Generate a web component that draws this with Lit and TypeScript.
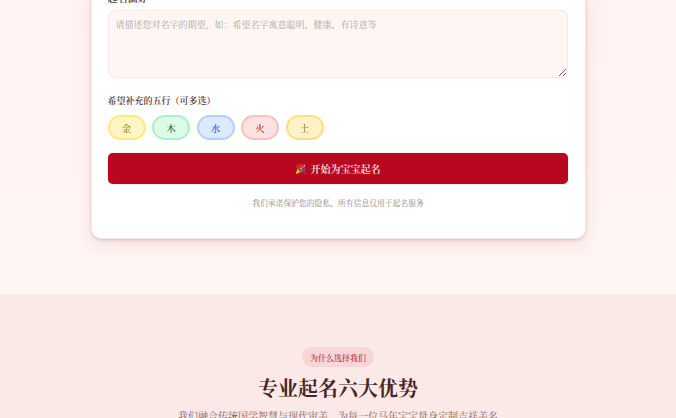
import { LitElement, html, css } from "lit";
import { customElement } from "lit/decorators.js";

const CHIPS = [
  { t: "金", c: "jin" },
  { t: "木", c: "mu" },
  { t: "水", c: "shui" },
  { t: "火", c: "huo" },
  { t: "土", c: "tu" },
];

@customElement("app-root")
export class AppRoot extends LitElement {
  static styles = css`
    :host {
      display: block;
      height: 418px;
      overflow: hidden;
      font-family: "Noto Serif CJK SC", "Liberation Serif", "Noto Sans CJK SC", serif;
      background: #fff;
    }
    .scroll { margin-top: -8px; }
    .top {
      background: linear-gradient(180deg, #fff3f1 0%, #fff5f3 100%);
      height: 302px;
      display: flex;
      justify-content: center;
      box-sizing: border-box;
    }
    .card {
      width: 495px;
      height: 247px;
      box-sizing: border-box;
      background: #fff;
      border-radius: 0 0 10px 10px;
      border: 1px solid #f9e6e6;
      border-top: 0;
      padding: 0 16px;
      box-shadow: 0 1px 3px rgba(130, 50, 50, 0.22), 0 6px 16px rgba(130, 50, 50, 0.1);
      display: flex;
      flex-direction: column;
    }
    .lbl {
      font-size: 9px;
      line-height: 14px;
      font-weight: 600;
      color: #4a3030;
    }
    .top-lbl { height: 12px; margin-top: -1px; margin-bottom: 7px; font-size: 10px; }
    textarea {
      display: block;
      width: 460px;
      height: 68px;
      box-sizing: border-box;
      border: 1.5px solid #fae8e4;
      border-radius: 6px;
      background: #fff6f4;
      padding: 7px 7px;
      font: inherit;
      font-size: 9px;
      line-height: 14px;
      outline: none;
      color: #4a3030;
    }
    textarea::placeholder { color: #aba4a4; }
    .lbl5 { margin-top: 16px; }
    .chips { display: flex; gap: 6.5px; margin-top: 7px; }
    .chip {
      width: 38px;
      height: 25px;
      box-sizing: border-box;
      border-radius: 13px;
      border-width: 2px;
      border-style: solid;
      display: flex;
      align-items: center;
      justify-content: center;
      font-size: 9.5px;
      font-weight: 500;
    }
    .jin { background: #fef7c3; border-color: #fdea7e; color: #9a7b12; }
    .mu { background: #dcfce7; border-color: #aeeec8; color: #15703d; }
    .shui { background: #dbeafe; border-color: #b4d2f8; color: #2a55c0; }
    .huo { background: #fee2e2; border-color: #f9c2c2; color: #b02030; }
    .tu { background: #fef3c7; border-color: #f9df85; color: #92702a; }
    .go {
      margin-top: 13px;
      height: 31px;
      width: 460px;
      border: 0;
      border-radius: 5px;
      background: #b8071e;
      box-shadow: 0 0 1px rgba(184, 7, 30, 0.5);
      color: #fdeeee;
      font: inherit;
      font-size: 10px;
      font-weight: 600;
      display: flex;
      align-items: center;
      justify-content: center;
      gap: 5px;
    }
    .emoji { font-size: 9px; }
    .note {
      margin-top: 13px;
      text-align: center;
      font-size: 7.8px;
      line-height: 12px;
      color: #8e8787;
    }
    .why {
      background: #fbe9e7;
      height: 140px;
      box-sizing: border-box;
      padding-top: 53px;
      display: flex;
      flex-direction: column;
      align-items: center;
    }
    .pill {
      width: 72px;
      height: 20px;
      border-radius: 10px;
      background: #f7d6d8;
      color: #b8253c;
      font-size: 8px;
      font-weight: 500;
      display: flex;
      align-items: center;
      justify-content: center;
    }
    h2 {
      margin: 8px 0 0;
      font-size: 20px;
      line-height: 26px;
      font-weight: 700;
      color: #4a2525;
    }
    .sub {
      margin: 7px 0 0;
      font-size: 10px;
      line-height: 15px;
      color: #7d6464;
      white-space: nowrap;
    }
  `;

  render() {
    return html`
      <div class="scroll">
        <div class="top">
          <div class="card">
            <div class="lbl top-lbl">起名偏好</div>
            <textarea placeholder="请描述您对名字的期望，如：希望名字寓意聪明、健康、有诗意等"></textarea>
            <div class="lbl lbl5">希望补充的五行（可多选）</div>
            <div class="chips">
              ${CHIPS.map((c) => html`<div class="chip ${c.c}">${c.t}</div>`)}
            </div>
            <button class="go"><span class="emoji">🎉</span><span>开始为宝宝起名</span></button>
            <div class="note">我们承诺保护您的隐私，所有信息仅用于起名服务</div>
          </div>
        </div>
        <div class="why">
          <div class="pill">为什么选择我们</div>
          <h2>专业起名六大优势</h2>
          <p class="sub">我们融合传统国学智慧与现代审美，为每一位马年宝宝量身定制吉祥美名</p>
        </div>
      </div>
    `;
  }
}
